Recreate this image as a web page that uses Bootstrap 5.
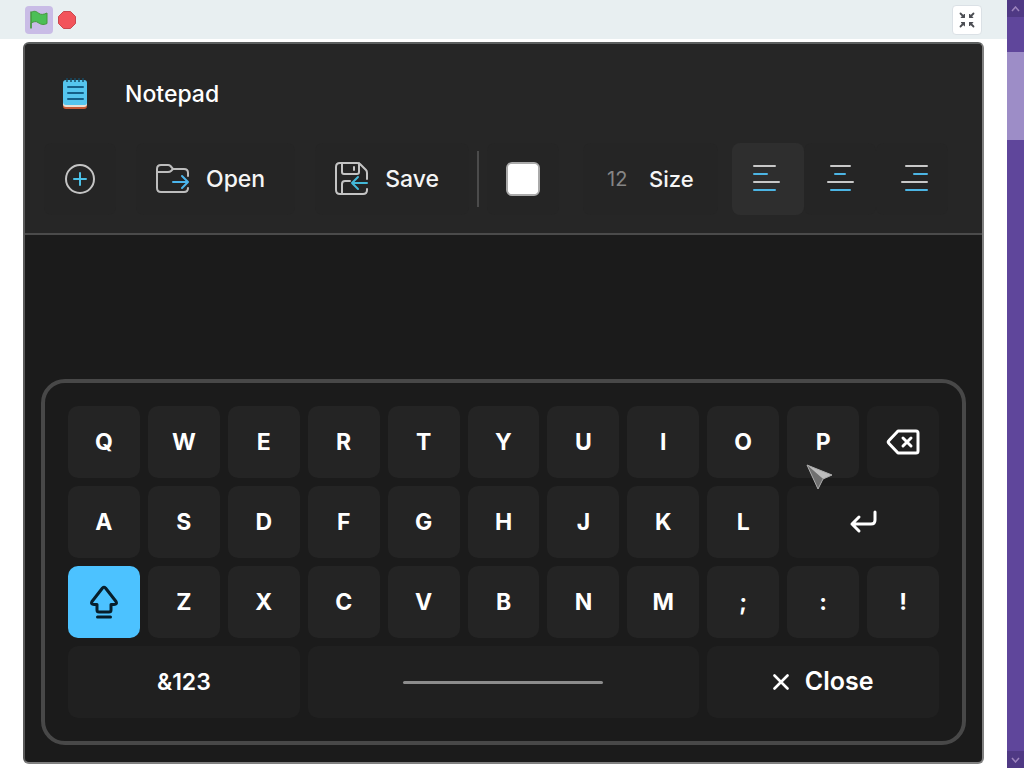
<!DOCTYPE html>
<html lang="en" data-bs-theme="dark">
<head>
<meta charset="utf-8">
<meta name="viewport" content="width=device-width, initial-scale=1">
<title>Notepad</title>
<link href="https://cdn.jsdelivr.net/npm/bootstrap@5.3.0/dist/css/bootstrap.min.css" rel="stylesheet">
<style>
  body { background: #fff; font-family: Inter, "Liberation Sans", sans-serif; color: #f5f5f5; }
  svg { display: block; flex: none; }
  .player-bar { background: #e8eff1; height: 39px; padding: 0 25px; }
  .flag-btn { background: #c9bce6; width: 28px; height: 28px; border: 0; border-radius: 4px; }
  .stop-btn { background: none; border: 0; width: 20px; height: 20px; }
  .shrink-btn { background: #fff; border: 1px solid #dbe1e6; border-radius: 4px; width: 30px; height: 30px; }
  .app-stage { margin: 3px 23px 4px; background: #1b1b1b; border: 2px solid #808080; border-top-color: #5c5f5f; border-left-color: #5a5a5a; border-radius: 6px; overflow: hidden; }
  .app-head { background: #262626; border-bottom: 2px solid #4b4b4b; }
  .app-title { padding: 0 37px; height: 99px; gap: 37px; }
  .app-title h1 { font-size: 23px; line-height: 32px; font-weight: 500; }
  .tool-row { height: 72px; margin: 0 34px 18px 19px; }
  .tool { height: 72px; border: 0; border-radius: 8px; background: #252525; color: #f5f5f5; font-size: 23px; font-weight: 500; padding: 0 30px 0 20px; }
  .tool-icon { width: 72px; padding: 0; }
  .tool-icon.active { background: #2e2e2e; }
  .tool-wide { margin-left: 20px; }
  .size-tool { padding: 0 24px; font-size: 22px; }
  .tool-rule { width: 2px; height: 56px; background: #4b4b4b; }
  .swatch { width: 34px; height: 34px; padding: 0; border: 2px solid #aaa; border-radius: 6px; background: #fff; }
  .swatch::-webkit-color-swatch-wrapper { padding: 0; }
  .swatch::-webkit-color-swatch { border: 0; border-radius: 4px; }
  .size-input { width: 26px; padding: 0; border: 0; background: none; color: #858585; font-size: 20px; }
  .keyboard { border: 4px solid #484848; border-radius: 24px; padding: 23px; margin: 0 16px 17px; }
  .key-grid { display: grid; grid-template-columns: repeat(11, 1fr); grid-auto-rows: 72px; gap: 8px; }
  .keycap { border: 0; border-radius: 10px; background: #242424; color: #fff; font-size: 23px; font-weight: 700; padding: 0; }
  .keycap.flat { background: #202020; font-weight: 600; }
  .keycap.on { background: #4cc2ff; }
  .close-label { font-size: 25px; }
  .span-2 { grid-column: span 2; }
  .span-3 { grid-column: span 3; }
  .span-5 { grid-column: span 5; }
  .space-line { width: 200px; height: 3px; border-radius: 2px; background: #8c8c8c; }
  .pointer { position: absolute; left: 19px; top: 58px; z-index: 2; }
  .page-scroll { width: 17px; background: #5f469b; }
  .scroll-end { height: 17px; background: #4f3984; }
  .scroll-thumb { height: 88px; margin-top: 35px; background: #9d8dc7; }
</style>
</head>
<body>
<div class="d-flex min-vh-100">
  <main class="flex-grow-1 d-flex flex-column">
    <div class="player-bar d-flex align-items-center gap-1">
      <button class="flag-btn d-flex align-items-center justify-content-center p-0" aria-label="Start">
        <svg width="20" height="20" viewBox="0 0 20 20"><path d="M2 2.500C6 0 8 2 10 3.500S15 4.500 18 3V13.500C14 15.500 11 14 9 12.500S5 11.500 2 13V18" fill="#4cbf56" stroke="#45993d" stroke-linejoin="round"/><path d="M2 2V18" stroke="#45993d" stroke-width="1.500" stroke-linecap="round"/></svg>
      </button>
      <button class="stop-btn p-0 d-flex align-items-center justify-content-center" aria-label="Stop">
        <svg width="20" height="20" viewBox="0 0 20 20"><path d="M6.500 1.500h7l5 5v7l-5 5h-7l-5-5v-7z" fill="#f2545b" stroke="#c8484e" stroke-linejoin="round"/></svg>
      </button>
      <button class="shrink-btn ms-auto p-0 d-flex align-items-center justify-content-center" aria-label="Exit full screen">
        <svg width="16" height="16" viewBox="0 0 16 16" fill="#4a4c52" stroke="#4a4c52" stroke-width="1.800" stroke-linecap="round"><path d="M1.500 1.500L5 5M14.500 1.500L11 5M1.500 14.500L5 11M14.500 14.500L11 11"/><path d="M5.500 2.500v3h-3zM10.500 2.500v3h3zM5.500 13.500v-3h-3zM10.500 13.500v-3h3z" stroke-width="1"/></svg>
      </button>
    </div>

    <section class="app-stage flex-grow-1 d-flex flex-column">
      <header class="app-head">
        <div class="app-title d-flex align-items-center">
          <svg width="26" height="32" viewBox="0 0 26 32"><path d="M1 8h24v20q0 3-3 3H4q-3 0-3-3z" fill="#c65a35"/><path d="M1 8h24v18q0 3-3 3H4q-3 0-3-3z" fill="#e8e1d6"/><path d="M1 5q0-3 3-3h18q3 0 3 3v20q0 2-2 2H4q-3 0-3-3z" fill="#55c5ee"/><path d="M5 0v4M9 0v4M13 0v4M17 0v4M21 0v4" stroke="#164b65" stroke-width="1.500"/><path d="M6 9h15M6 15h15M6 21h15" stroke="#145f88" stroke-width="2" stroke-linecap="round"/></svg>
          <h1 class="mb-0">Notepad</h1>
        </div>
        <div class="tool-row d-flex align-items-center">
          <button class="tool tool-icon d-flex align-items-center justify-content-center" aria-label="New">
            <svg width="32" height="32" viewBox="0 0 32 32" fill="none" stroke-width="2" stroke-linecap="round"><circle cx="16" cy="16" r="14" stroke="#c4c4c4"/><path d="M10 16h12M16 10v12" stroke="#4cc2e8"/></svg>
          </button>
          <button class="tool tool-wide d-flex align-items-center gap-3">
            <svg width="34" height="32" viewBox="0 0 34 32" fill="none" stroke-width="2" stroke-linecap="round" stroke-linejoin="round"><path d="M32 13V10q0-4-4-4H17L14.500 3Q13.500 2 12 2H5Q1 2 1 6v19q0 4 4 4h23q4 0 4-4M1 9h11q2 0 3-1l2-2" stroke="#bdbdbd"/><path d="M17 19h14M26 13l6 6-6 6" stroke="#4bb5ec"/></svg>
            <span>Open</span>
          </button>
          <button class="tool tool-wide d-flex align-items-center gap-3">
            <svg width="34" height="34" viewBox="0 0 34 34" fill="none" stroke-width="2" stroke-linecap="round" stroke-linejoin="round"><path d="M32 17V11q0-2-1-3l-6-6q-1-1-3-1H5Q1 1 1 5v23q0 4 4 4h23q4 0 4-4v-1M7 1v9q0 2 2 2h13q2 0 2-2V1M7 32V22q0-3 3-3h5M19 5v3" stroke="#c4c4c4"/><path d="M32 21H17M23 15l-6 6 6 6" stroke="#43b8d8"/></svg>
            <span>Save</span>
          </button>
          <div class="tool-rule ms-2"></div>
          <label class="tool tool-icon d-flex align-items-center justify-content-center ms-2" aria-label="Text colour"><input class="swatch" type="color" value="#ffffff"></label>
          <div class="tool size-tool d-flex align-items-center gap-3 ms-4">
            <input class="size-input" id="size" type="text" value="12">
            <label for="size">Size</label>
          </div>
          <div class="d-flex ms-auto">
            <button class="tool tool-icon active d-flex align-items-center justify-content-center" aria-label="Align left">
              <svg width="32" height="28" viewBox="0 0 32 28" fill="none" stroke-width="2" stroke-linecap="round"><path d="M2 1h21M2 17h25" stroke="#c8c8c8"/><path d="M2 9h13M2 25h21" stroke="#4cb5e4"/></svg>
            </button>
            <button class="tool tool-icon d-flex align-items-center justify-content-center" aria-label="Align centre">
              <svg width="32" height="28" viewBox="0 0 32 28" fill="none" stroke-width="2" stroke-linecap="round"><path d="M7 1h19M4 17h25" stroke="#c8c8c8"/><path d="M11 9h10M7 25h19" stroke="#4cb5e4"/></svg>
            </button>
            <button class="tool tool-icon d-flex align-items-center justify-content-center" aria-label="Align right">
              <svg width="32" height="28" viewBox="0 0 32 28" fill="none" stroke-width="2" stroke-linecap="round"><path d="M10 1h21M6 17h25" stroke="#c8c8c8"/><path d="M18 9h13M10 25h21" stroke="#4cb5e4"/></svg>
            </button>
          </div>
        </div>
      </header>

      <div class="keyboard mt-auto">
        <div class="key-grid">
          <button class="keycap">Q</button><button class="keycap">W</button><button class="keycap">E</button><button class="keycap">R</button><button class="keycap">T</button><button class="keycap">Y</button><button class="keycap">U</button><button class="keycap">I</button><button class="keycap">O</button>
          <button class="keycap position-relative">P
            <svg class="pointer" width="28" height="28" viewBox="0 0 28 28"><path d="M1 1l25 10-9 4-5 10z" fill="#8c8c8c"/><path d="M1 1l25 10-9 4z" fill="#bdbdbd"/><path d="M1 1l16 14-5 10z" fill="#707070"/><path d="M1 1l25 10-9 4-5 10z" fill="none" stroke="#aaa"/></svg>
          </button>
          <button class="keycap flat d-flex align-items-center justify-content-center" aria-label="Backspace">
            <svg width="34" height="26" viewBox="0 0 34 26" fill="none" stroke="#fff" stroke-width="3" stroke-linecap="round" stroke-linejoin="round"><path d="M12 2h18q2 0 2 2v18q0 2-2 2H12L3 14.500q-1.500-1.500 0-3z"/><path d="M17 9l8 8M25 9l-8 8"/></svg>
          </button>
          <button class="keycap">A</button><button class="keycap">S</button><button class="keycap">D</button><button class="keycap">F</button><button class="keycap">G</button><button class="keycap">H</button><button class="keycap">J</button><button class="keycap">K</button><button class="keycap">L</button>
          <button class="keycap flat span-2 d-flex align-items-center justify-content-center" aria-label="Enter">
            <svg width="28" height="24" viewBox="0 0 28 24" fill="none" stroke="#fff" stroke-width="3" stroke-linecap="round" stroke-linejoin="round"><path d="M26 2v8q0 4-4 4H3M10 7l-7 7 7 7"/></svg>
          </button>
          <button class="keycap on d-flex align-items-center justify-content-center" aria-label="Shift">
            <svg width="30" height="34" viewBox="0 0 30 34" fill="none" stroke="#071e2b" stroke-width="3" stroke-linecap="round" stroke-linejoin="round"><path d="M13.500 3q1.500-1.500 3 0L27 16.500q1.500 3-2 3h-3V25q0 2-2 2H10q-2 0-2-2v-5.500H5q-3.500 0-2-3zM8.500 32h13"/></svg>
          </button>
          <button class="keycap">Z</button><button class="keycap">X</button><button class="keycap">C</button><button class="keycap">V</button><button class="keycap">B</button><button class="keycap">N</button><button class="keycap">M</button><button class="keycap">;</button><button class="keycap">:</button><button class="keycap">!</button>
          <button class="keycap flat span-3">&amp;123</button>
          <button class="keycap flat span-5 d-flex align-items-center justify-content-center" aria-label="Space"><span class="space-line"></span></button>
          <button class="keycap flat span-3 d-flex align-items-center justify-content-center gap-3">
            <svg width="16" height="16" viewBox="0 0 16 16" stroke="#fff" stroke-width="2.600" stroke-linecap="round"><path d="M1.500 1.500l13 13M14.500 1.500l-13 13"/></svg>
            <span class="close-label">Close</span>
          </button>
        </div>
      </div>
    </section>
  </main>

  <aside class="page-scroll d-flex flex-column" aria-hidden="true">
    <div class="scroll-end d-flex align-items-center justify-content-center"><svg width="9" height="6" viewBox="0 0 9 6" fill="none" stroke="#9d84bd" stroke-width="1.500"><path d="M1 5l3.500-4L8 5"/></svg></div>
    <div class="scroll-thumb"></div>
    <div class="scroll-end mt-auto d-flex align-items-center justify-content-center"><svg width="9" height="6" viewBox="0 0 9 6" fill="none" stroke="#9d84bd" stroke-width="1.500"><path d="M1 1l3.500 4L8 1"/></svg></div>
  </aside>
</div>
<script src="https://cdn.jsdelivr.net/npm/bootstrap@5.3.0/dist/js/bootstrap.bundle.min.js"></script>
</body>
</html>
